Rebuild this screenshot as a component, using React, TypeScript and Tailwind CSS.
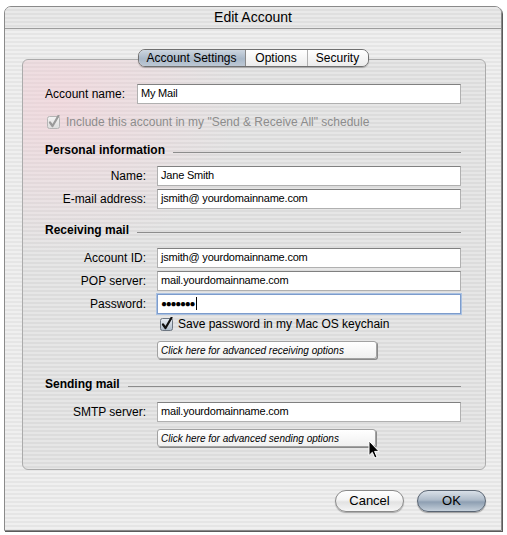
import React from "react";

const font = "font-['Liberation_Sans',Arial,sans-serif]";

function Check({ disabled }: { disabled?: boolean }) {
  const stroke = disabled ? "#9a9a9a" : "#111";
  return (
    <svg width="14" height="14" viewBox="0 0 14 14" className="shrink-0">
      <defs>
        <linearGradient id={disabled ? "cbd" : "cbe"} x1="0" y1="0" x2="0" y2="1">
          <stop offset="0" stopColor={disabled ? "#f4f4f4" : "#e9eef4"} />
          <stop offset="1" stopColor={disabled ? "#dcdcdc" : "#aebccb"} />
        </linearGradient>
      </defs>
      <rect x="0.5" y="1.5" width="12" height="12" rx="2" fill={`url(#${disabled ? "cbd" : "cbe"})`} stroke={disabled ? "#b5b5b5" : "#6e7782"} />
      <path d="M3 7.5 L5.5 11 L11.5 0.8" fill="none" stroke={stroke} strokeWidth="2.2" strokeLinecap="round" strokeLinejoin="round" />
    </svg>
  );
}

function Field({ value, focused }: { value: React.ReactNode; focused?: boolean }) {
  return (
    <div
      className={
        focused
          ? "h-[20px] w-[304px] bg-white border border-[#7d9ccc] shadow-[0_0_0_1px_#a9c1e2] flex items-center pl-[3px] pb-[1px] text-[11px] tracking-[-0.2px]"
          : "h-[20px] w-[304px] bg-white border border-[#b0b0b0] border-t-[#808080] flex items-center pl-[3px] pb-[2px] text-[11px] tracking-[-0.2px]"
      }
    >
      {value}
    </div>
  );
}

function Row({ label, value, focused }: { label: string; value: React.ReactNode; focused?: boolean }) {
  return (
    <div className="flex items-center">
      <div className="w-[101px] text-right text-[12px]">{label}</div>
      <div className="ml-[11px]">
        <Field value={value} focused={focused} />
      </div>
    </div>
  );
}

function Header({ text }: { text: string }) {
  return (
    <div className="flex items-center h-[14px] w-[416px]">
      <span className="text-[12px] font-bold whitespace-nowrap">{text}</span>
      <div className="flex-1 ml-[8px] mt-[5px] h-px bg-[#8c8c8c]" />
    </div>
  );
}

function AdvButton({ text, w }: { text: string; w: string }) {
  return (
    <div
      className={
        w +
        " h-[18px] rounded-[3px] border border-[#a2a2a2] bg-[linear-gradient(180deg,#ffffff,#f0f0f0)] shadow-[1px_1px_0_#8a8a8a] flex items-center pl-[3px] text-[10px] italic"
      }
    >
      {text}
    </div>
  );
}

export default function App() {
  return (
    <div className={"relative w-[507px] h-[535px] bg-white pt-[6px] pl-[4px] pr-[5px] pb-[4px] text-black " + font}>
      <div className="h-full flex flex-col border border-[#8a8a8a] rounded-t-[7px] shadow-[1px_1px_0_#5a5a5a] bg-[repeating-linear-gradient(180deg,#efefef_0px,#efefef_2px,#e5e5e5_2px,#e5e5e5_4px)] overflow-hidden">
        <div className="h-[22px] shrink-0 flex items-center justify-center text-[14px] border-b border-[#9c9c9c] bg-[repeating-linear-gradient(180deg,#e9e9e9_0px,#e9e9e9_2px,#dfdfdf_2px,#dfdfdf_4px)]">
          Edit Account
        </div>
        <div className="flex-1 flex flex-col pt-[20px] pl-[17px] pr-[15px]">
          <div className="relative z-10 flex justify-center pr-[2px]">
            <div className="flex h-[18px] rounded-[7px] border border-[#707070] overflow-hidden text-[12px] shadow-[0_1px_1px_rgba(0,0,0,0.25)]">
              <div className="w-[107px] flex items-center justify-center bg-[linear-gradient(180deg,#cdd6e0,#a9b8c8_55%,#bdc8d4)] border-r border-[#8a8a8a]">
                Account Settings
              </div>
              <div className="w-[62px] flex items-center justify-center bg-[linear-gradient(180deg,#ffffff,#ececec)] border-r border-[#b0b0b0]">
                Options
              </div>
              <div className="w-[60px] flex items-center justify-center bg-[linear-gradient(180deg,#ffffff,#ececec)]">
                Security
              </div>
            </div>
          </div>
          <div className="-mt-[8px] h-[411px] rounded-[6px] border border-[#ababab] bg-[radial-gradient(ellipse_at_8%_10%,rgba(255,205,215,0.45),rgba(255,205,215,0)_30%),repeating-linear-gradient(180deg,#e6e6e6_0px,#e6e6e6_2px,#dcdcdc_2px,#dcdcdc_4px)] pt-[24px] pl-[22px]">
            <div className="flex items-center h-[20px]">
              <div className="w-[92px] text-[12px]">Account name:</div>
              <div className="h-[20px] w-[324px] bg-white border border-[#b0b0b0] border-t-[#808080] flex items-center pl-[3px] pb-[2px] text-[11px] tracking-[-0.2px]">
                My Mail
              </div>
            </div>
            <div className="mt-[11px] h-[14px] flex items-center pl-[2px] text-[12px] text-[#8c8c8c]">
              <Check disabled />
              <span className="ml-[5px]">Include this account in my "Send &amp; Receive All" schedule</span>
            </div>

            <div className="mt-[14px]">
              <Header text="Personal information" />
            </div>
            <div className="mt-[9px] flex flex-col gap-[3px]">
              <Row label="Name:" value="Jane Smith" />
              <Row label="E-mail address:" value="jsmith@ yourdomainname.com" />
            </div>

            <div className="mt-[14px]">
              <Header text="Receiving mail" />
            </div>
            <div className="mt-[11px] flex flex-col gap-[3px]">
              <Row label="Account ID:" value="jsmith@ yourdomainname.com" />
              <Row label="POP server:" value="mail.yourdomainname.com" />
              <Row
                label="Password:"
                focused
                value={
                  <span className="flex items-center">
                    <span className="text-[10px] font-bold tracking-[-1.3px]">●●●●●●●</span>
                    <span className="ml-[2px] w-px h-[13px] bg-black" />
                  </span>
                }
              />
            </div>
            <div className="mt-[3px] ml-[115px] h-[14px] flex items-center text-[12px]">
              <Check />
              <span className="ml-[4px]">Save password in my Mac OS keychain</span>
            </div>
            <div className="mt-[10px] ml-[112px]">
              <AdvButton text="Click here for advanced receiving options" w="w-[220px]" />
            </div>

            <div className="mt-[18px]">
              <Header text="Sending mail" />
            </div>
            <div className="mt-[11px]">
              <Row label="SMTP server:" value="mail.yourdomainname.com" />
            </div>
            <div className="mt-[7px] ml-[112px]">
              <AdvButton text="Click here for advanced sending options" w="w-[219px]" />
            </div>
          </div>
          <div className="mt-[20px] flex justify-end gap-[13px] pr-[0px]">
            <div className="w-[69px] h-[22px] rounded-full border border-[#8a8a8a] bg-[linear-gradient(180deg,#ffffff_0%,#f4f4f4_45%,#e2e2e2_55%,#f6f6f6_100%)] shadow-[0_1px_1px_rgba(0,0,0,0.3)] flex items-center justify-center text-[13px]">
              Cancel
            </div>
            <div className="w-[69px] h-[22px] rounded-full border border-[#5a6573] bg-[linear-gradient(180deg,#d9e0e8_0%,#aebbc9_45%,#8e9fb2_55%,#c4cfda_100%)] shadow-[0_1px_1px_rgba(0,0,0,0.35)] flex items-center justify-center text-[13px]">
              OK
            </div>
          </div>
        </div>
      </div>
      <svg className="absolute left-[368px] top-[440px]" width="13" height="20" viewBox="0 0 13 20">
        <path d="M1 1 L1 15.5 L4.3 12.3 L6.8 18 L9 17 L6.6 11.4 L11 11.4 Z" fill="#000" stroke="#fff" strokeWidth="1" strokeLinejoin="round" />
      </svg>
    </div>
  );
}
